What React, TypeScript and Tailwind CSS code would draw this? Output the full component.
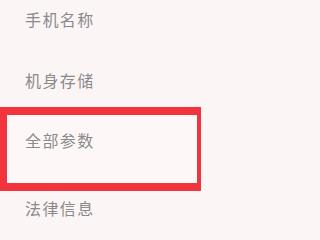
const font = { fontFamily: '"Noto Sans CJK SC", "Noto Sans", sans-serif' };

function Row({ label, className }: { label: string; className: string }) {
  return (
    <div className={className}>
      <span className="block text-[16px] leading-[20px] tracking-[1.4px] text-[#8a8a8a]">{label}</span>
    </div>
  );
}

export default function App() {
  return (
    <div className="min-h-screen w-full bg-[#fcf5f6]" style={font}>
      <div className="flex h-[224px] w-[203px] flex-col overflow-hidden">
        <Row label="手机名称" className="h-[60px] pl-[25px] pt-[9px]" />
        <Row label="机身存储" className="h-[47px] pl-[25px] pt-[10px]" />
        <div className="mr-[2px] h-[84px] border-y-[8px] border-l-[7px] border-r-[4px] border-[#f2353d] bg-[#fdf7f7] pl-[18px] pt-[15px]">
          <span className="block text-[16px] leading-[20px] tracking-[1.4px] text-[#8a8a8a]">全部参数</span>
        </div>
        <Row label="法律信息" className="pl-[25px] pt-[7px]" />
      </div>
    </div>
  );
}
